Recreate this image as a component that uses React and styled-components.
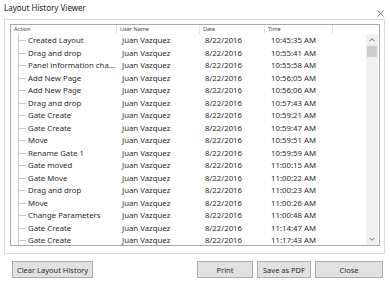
import styled, { createGlobalStyle } from "styled-components";

const rows = [
  ["Created Layout", "10:45:35 AM"],
  ["Drag and drop", "10:55:41 AM"],
  ["Panel information cha...", "10:55:58 AM"],
  ["Add New Page", "10:56:05 AM"],
  ["Add New Page", "10:56:06 AM"],
  ["Drag and drop", "10:57:43 AM"],
  ["Gate Create", "10:59:21 AM"],
  ["Gate Create", "10:59:47 AM"],
  ["Move", "10:59:51 AM"],
  ["Rename Gate 1", "10:59:59 AM"],
  ["Gate moved", "11:00:15 AM"],
  ["Gate Move", "11:00:22 AM"],
  ["Drag and drop", "11:00:23 AM"],
  ["Move", "11:00:26 AM"],
  ["Change Parameters", "11:00:48 AM"],
  ["Gate Create", "11:14:47 AM"],
  ["Gate Create", "11:17:43 AM"],
];

const App = () => {
  return (
    <Window>
      <Global />
      <TitleBar>
        <Title>Layout History Viewer</Title>
        <CloseX viewBox="0 0 8 8">
          <path d="M0.5 0.5 L7.5 7.5 M7.5 0.5 L0.5 7.5" />
        </CloseX>
      </TitleBar>
      <Group>
        <ListView>
          <HeaderRow>
            <HeadCell>Action</HeadCell>
            <HeadCell>User Name</HeadCell>
            <HeadCell>Date</HeadCell>
            <HeadCell>Time</HeadCell>
            <HeadCell $last />
          </HeaderRow>
          <Body>
            <Rows>
              {rows.map(([action, time], i) => (
                <Row key={i}>
                  <ActionCell>
                    <TreeLine />
                    {action}
                  </ActionCell>
                  <Cell>Juan Vazquez</Cell>
                  <Cell>8/22/2016</Cell>
                  <Cell $pad={6}>{time}</Cell>
                </Row>
              ))}
            </Rows>
            <ScrollBar>
              <Arrow viewBox="0 0 7 4">
                <path d="M0.5 3.5 L3.5 0.5 L6.5 3.5" />
              </Arrow>
              <Thumb />
              <Track />
              <Arrow viewBox="0 0 7 4">
                <path d="M0.5 0.5 L3.5 3.5 L6.5 0.5" />
              </Arrow>
            </ScrollBar>
          </Body>
        </ListView>
      </Group>
      <Footer>
        <Button $w={81}>Clear Layout History</Button>
        <Spacer />
        <Button $w={56}>Print</Button>
        <Button $w={54}>Save as PDF</Button>
        <Button $w={68} $gap={4}>Close</Button>
      </Footer>
    </Window>
  );
};

export default App;

const Global = createGlobalStyle`
  body {
    margin: 0;
    background: #fff;
    font-family: "Noto Sans", "Open Sans", sans-serif;
    color: #000;
  }
`;

const Window = styled.div`
  width: 390px;
  height: 284px;
  background: #fff;
  display: flex;
  flex-direction: column;
  overflow: hidden;
`;

const TitleBar = styled.div`
  height: 19px;
  display: flex;
  justify-content: space-between;
  padding: 0 6px 0 4px;
  box-sizing: border-box;
`;

const Title = styled.div`
  font-size: 8px;
  line-height: 15px;
  color: #1a1a1a;
`;

const CloseX = styled.svg`
  width: 7px;
  height: 7px;
  margin-top: 10px;
  stroke: #444;
  stroke-width: 0.8;
  fill: none;
`;

const Group = styled.div`
  margin: 0 5px 0 4px;
  height: 235px;
  border: 1px solid #d8d8d8;
  padding: 4px 4px 7px 5px;
  box-sizing: border-box;
  display: flex;
`;

const ListView = styled.div`
  flex: 1;
  border: 1px solid #a9a9a9;
  display: flex;
  flex-direction: column;
  overflow: hidden;
`;

const HeaderRow = styled.div`
  height: 9px;
  display: grid;
  grid-template-columns: 106px 83px 65px 68px 1fr;
  flex-shrink: 0;
`;

const HeadCell = styled.div`
  font-size: 5.5px;
  line-height: 9px;
  color: #444;
  padding-left: 3px;
  border-right: ${(p) => (p.$last ? "none" : "1px solid #e5e5e5")};
  white-space: nowrap;
`;

const Body = styled.div`
  flex: 1;
  display: flex;
  overflow: hidden;
`;

const Rows = styled.div`
  flex: 1;
  overflow: hidden;
`;

const Row = styled.div`
  height: 12.5px;
  display: grid;
  grid-template-columns: 106px 83px 65px 68px;
  font-size: 7.8px;
  line-height: 12.5px;
  color: #2b2b2b;
  white-space: nowrap;
`;

const ActionCell = styled.div`
  position: relative;
  padding-left: 17px;
  overflow: hidden;
`;

const TreeLine = styled.span`
  position: absolute;
  left: 7px;
  top: 0;
  bottom: 0;
  width: 8px;
  border-left: 1px solid #c8c8c8;

  &::after {
    content: "";
    position: absolute;
    left: 0;
    top: 6px;
    width: 7px;
    border-top: 1px solid #c8c8c8;
  }
`;

const Cell = styled.div`
  padding-left: ${(p) => p.$pad || 5}px;
`;

const ScrollBar = styled.div`
  width: 12px;
  margin-right: 1px;
  background: #f0f0f0;
  display: flex;
  flex-direction: column;
  align-items: center;
`;

const Arrow = styled.svg`
  width: 6px;
  height: 4px;
  margin: 4px 0;
  stroke: #606060;
  stroke-width: 1.1;
  fill: none;
  flex-shrink: 0;
`;

const Thumb = styled.div`
  width: 10px;
  height: 11px;
  background: #cdcdcd;
`;

const Track = styled.div`
  flex: 1;
`;

const Footer = styled.div`
  display: flex;
  padding: 7px 7px 0 12px;
`;

const Spacer = styled.div`
  flex: 1;
`;

const Button = styled.button`
  width: ${(p) => p.$w}px;
  height: 17px;
  margin-left: ${(p) => p.$gap ?? 4}px;
  padding: 0;
  background: #e1e1e1;
  border: 1px solid #adadad;
  font-family: "Noto Sans", "Open Sans", sans-serif;
  font-size: 7.5px;
  color: #2b2b2b;

  &:first-child {
    margin-left: 0;
  }
`;
